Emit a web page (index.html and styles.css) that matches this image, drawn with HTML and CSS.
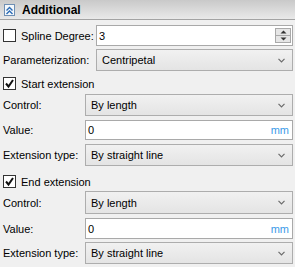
FILE: index.html
```html
<!DOCTYPE html>
<html lang="en">
<head>
    <meta charset="UTF-8">
    <title>Additional</title>
    <link rel="stylesheet" href="styles.css">
</head>
<body>
    <div class="panel">
        <!-- Cabeçalho do grupo -->
        <div class="header">
            <span class="collapse-icon">
                <svg width="9" height="9" viewBox="0 0 9 9">
                    <path d="M1.5 4.5 L4.5 1.5 L7.5 4.5 M1.5 8 L4.5 5 L7.5 8" fill="none" stroke="#2a6bb5" stroke-width="1.4"/>
                </svg>
            </span>
            <span class="header-title">Additional</span>
        </div>

        <div class="content">
            <div class="row row-spline">
                <label class="check-label wide">
                    <span class="checkbox"></span>Spline Degree:
                </label>
                <div class="input">
                    <span class="input-text">3</span>
                    <div class="spin">
                        <span class="spin-btn"><svg width="7" height="4" viewBox="0 0 7 4"><path d="M0.5 3.5 L3.5 0.5 L6.5 3.5 Z" fill="#333"/></svg></span>
                        <span class="spin-btn"><svg width="7" height="4" viewBox="0 0 7 4"><path d="M0.5 0.5 L3.5 3.5 L6.5 0.5 Z" fill="#333"/></svg></span>
                    </div>
                </div>
            </div>

            <div class="row row-param">
                <span class="label wide">Parameterization:</span>
                <div class="select">
                    <span class="select-text">Centripetal</span>
                    <svg class="chevron" width="7" height="5" viewBox="0 0 7 5"><path d="M0.5 0.8 L3.5 3.8 L6.5 0.8" fill="none" stroke="#6b6b6b" stroke-width="1.2"/></svg>
                </div>
            </div>

            <!-- Start extension -->
            <label class="check-row first">
                <span class="checkbox checked">
                    <svg width="11" height="11" viewBox="0 0 11 11"><path d="M2 5.5 L4.5 8.5 L9 2" fill="none" stroke="#111" stroke-width="2"/></svg>
                </span>Start extension
            </label>
            <div class="row sub-control">
                <span class="label">Control:</span>
                <div class="select">
                    <span class="select-text">By length</span>
                    <svg class="chevron" width="7" height="5" viewBox="0 0 7 5"><path d="M0.5 0.8 L3.5 3.8 L6.5 0.8" fill="none" stroke="#6b6b6b" stroke-width="1.2"/></svg>
                </div>
            </div>
            <div class="row sub-value">
                <span class="label">Value:</span>
                <div class="input value">
                    <span class="input-text">0</span>
                    <span class="unit">mm</span>
                </div>
            </div>
            <div class="row sub-type">
                <span class="label">Extension type:</span>
                <div class="select">
                    <span class="select-text">By straight line</span>
                    <svg class="chevron" width="7" height="5" viewBox="0 0 7 5"><path d="M0.5 0.8 L3.5 3.8 L6.5 0.8" fill="none" stroke="#6b6b6b" stroke-width="1.2"/></svg>
                </div>
            </div>

            <!-- End extension -->
            <label class="check-row second">
                <span class="checkbox checked">
                    <svg width="11" height="11" viewBox="0 0 11 11"><path d="M2 5.5 L4.5 8.5 L9 2" fill="none" stroke="#111" stroke-width="2"/></svg>
                </span>End extension
            </label>
            <div class="row sub-control end">
                <span class="label">Control:</span>
                <div class="select">
                    <span class="select-text">By length</span>
                    <svg class="chevron" width="7" height="5" viewBox="0 0 7 5"><path d="M0.5 0.8 L3.5 3.8 L6.5 0.8" fill="none" stroke="#6b6b6b" stroke-width="1.2"/></svg>
                </div>
            </div>
            <div class="row sub-value end">
                <span class="label">Value:</span>
                <div class="input value">
                    <span class="input-text">0</span>
                    <span class="unit">mm</span>
                </div>
            </div>
            <div class="row sub-type end">
                <span class="label">Extension type:</span>
                <div class="select">
                    <span class="select-text">By straight line</span>
                    <svg class="chevron" width="7" height="5" viewBox="0 0 7 5"><path d="M0.5 0.8 L3.5 3.8 L6.5 0.8" fill="none" stroke="#6b6b6b" stroke-width="1.2"/></svg>
                </div>
            </div>
        </div>
    </div>
</body>
</html>
```

FILE: styles.css
```css
* {
    margin: 0;
    padding: 0;
    box-sizing: border-box;
    font-family: 'Liberation Sans', Arial, sans-serif;
}

body {
    background-color: #f0f0f0;
    width: 295px;
    height: 267px;
    overflow: hidden;
    font-size: 11px;
    color: #000;
}

/* Cabeçalho */
.header {
    height: 20px;
    display: flex;
    align-items: center;
    padding-left: 4px;
    background: linear-gradient(to bottom, #c9c9c9, #e9e9e9);
    border-bottom: 1px solid #a3a3a3;
}

.collapse-icon {
    width: 11px;
    height: 12px;
    margin-top: 1px;
    border: 1px solid #6f8fb3;
    background-color: #f4f8fc;
    display: flex;
    align-items: center;
    justify-content: center;
}

.header-title {
    margin-left: 7px;
    font-size: 12px;
    font-weight: bold;
}

/* Conteúdo */
.content {
    padding: 0 2px 0 3px;
}

.row {
    display: flex;
    align-items: center;
}

.label,
.check-label {
    width: 82px;
    flex-shrink: 0;
    white-space: nowrap;
}

.wide {
    width: 93px;
}

.check-label,
.check-row {
    display: flex;
    align-items: center;
}

.checkbox {
    width: 13px;
    height: 13px;
    border: 1px solid #333;
    background-color: #fff;
    margin-right: 5px;
    display: flex;
    align-items: center;
    justify-content: center;
    flex-shrink: 0;
}

.row-spline {
    margin-top: 5px;
}

.row-param {
    margin-top: 3px;
}

.check-row {
    height: 15px;
}

.check-row.first {
    margin-top: 5px;
}

.check-row.second {
    margin-top: 8px;
}

.sub-control {
    margin-top: 3px;
}

.sub-control.end {
    margin-top: 2px;
}

.sub-value {
    margin-top: 4px;
}

.sub-type {
    margin-top: 4px;
}

.sub-type.end {
    margin-top: 3px;
}

/* Campos */
.input {
    flex: 1;
    height: 21px;
    background-color: #fff;
    border: 1px solid #a9a9a9;
    display: flex;
    align-items: center;
    padding-left: 2px;
    padding-right: 1px;
}

.input.value {
    height: 20px;
}

.sub-value.end .input.value {
    height: 21px;
}

.input-text {
    flex: 1;
}

.unit {
    color: #3b9ae8;
    padding-right: 2px;
}

.spin {
    display: flex;
    flex-direction: column;
    width: 16px;
}

.spin-btn {
    height: 8px;
    border: 1px solid #a9a9a9;
    background: #e6e6e6;
    display: flex;
    align-items: center;
    justify-content: center;
}

.spin-btn + .spin-btn {
    margin-top: -1px;
}

.select {
    flex: 1;
    height: 22px;
    border: 1px solid #adadad;
    background: linear-gradient(to bottom, #f1f1f1, #e4e4e4);
    display: flex;
    align-items: center;
    padding: 0 7px 0 5px;
}

.sub-control.end .select {
    height: 23px;
}

.select-text {
    flex: 1;
}

.chevron {
    display: block;
}
```
